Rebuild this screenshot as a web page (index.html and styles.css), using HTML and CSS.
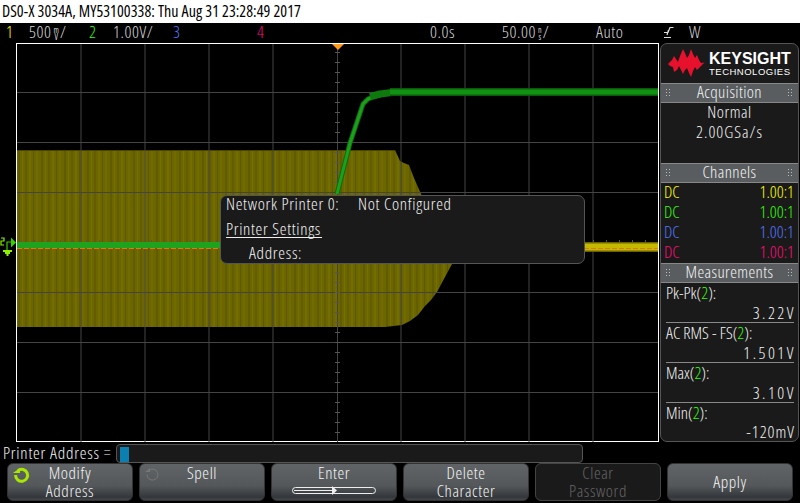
FILE: index.html
```html
<!DOCTYPE html>
<html lang="en">
<head>
<meta charset="utf-8">
<title>DSO-X 3034A</title>
<link rel="stylesheet" href="styles.css">
</head>
<body>
<div class="screen">
  <header class="title">DS0-X 3034A, MY53100338: Thu Aug 31 23:28:49 2017</header>
  <div class="status">
    <span class="ch1">1</span>
    <span>500<span class="stack"><i>m</i><i>V</i></span>/</span>
    <span class="ch2">2</span>
    <span>1.00V/</span>
    <span class="ch3">3</span>
    <span class="ch4">4</span>
    <span>0.0s</span>
    <span>50.00<span class="stack"><i>n</i><i>s</i></span>/</span>
    <span>Auto</span>
    <svg class="trig" width="10" height="12" viewBox="0 0 10 12"><path d="M0 11.500H7M0 6.500H4L6 1.500H9.500M4.500 4L3 9" fill="none" stroke="#ddd" stroke-width="1.200"/></svg>
    <span>W</span>
  </div>
  <main class="main">
    <div class="rail">
      <svg class="rail-marker" width="16" height="20" viewBox="0 0 16 20">
        <path d="M1 1H4V4H1V8H4" fill="none" stroke="#8cf000" stroke-width="1.200"/>
        <path d="M7 13V5H11" fill="none" stroke="#39d000" stroke-width="1.200"/>
        <path d="M11 0.500L16 5.500L11 10.500Z" fill="#39d000"/>
        <path d="M3 13H12V15H3ZM5 15H10V17H5ZM6.500 17H8.500V19H6.500Z" fill="#8cf000"/>
      </svg>
    </div>
    <section class="graticule">
      <svg class="scope" viewBox="17 44 641 398" width="641" height="398" xmlns="http://www.w3.org/2000/svg">
        <defs>
          <pattern id="stripes" x="17" y="0" width="23" height="400" patternUnits="userSpaceOnUse">
            <rect width="23" height="400" fill="#6c6600"/>
            <rect x="1" width="2" height="400" fill="#625c00"/>
            <rect x="5" width="1" height="400" fill="#767000"/>
            <rect x="8" width="2" height="400" fill="#645e00"/>
            <rect x="12" width="2" height="400" fill="#746e00"/>
            <rect x="16" width="1" height="400" fill="#5e5900"/>
            <rect x="19" width="2" height="400" fill="#726c00"/>
          </pattern>
        </defs>
        <path class="yellow-body" d="M17 150H395L400 161L404 163L409 165L414 178L421 194L452 264L445 277L437 292L431 300L425 306L418 315L410 321L402 325L385 327H17Z"/>
        <path class="yellow-edge" d="M17 150.500H395"/>
        <g class="gridlines">
          <path d="M81 44V442M145 44V442M209 44V442M273 44V442M337.500 44V442M401 44V442M465 44V442M529 44V442M593 44V442"/>
          <path d="M17 92.500H658M17 142.500H658M17 192.500H658M17 242.500H658M17 292.500H658M17 342.500H658M17 392.500H658"/>
        </g>
        <path class="ticks" d="M337.500 44V442" stroke-dasharray="1 9" stroke-dashoffset="-8"/>
        <path class="ticks" d="M17 242.500H658" stroke-dasharray="1 12" stroke-dashoffset="-4"/>
        <path class="yellow-trace-dim" d="M560 247H658"/>
        <path class="yellow-trace" d="M560 247H658"/>
        <path class="green-flat" d="M17 245H345"/>
        <path class="orange" d="M17 248.500H658"/>
        <path class="green-rise-dim" d="M337 194L350 143L363 104L368 99L373 97L388 92.500"/>
        <path class="green-rise" d="M337 194L350 143L363 104L368 99L373 97L388 92.500"/>
        <path class="green-shoulder" d="M370 96.500L380 94L392 92.500"/>
        <path class="green-top-dim" d="M390 92H658"/>
        <path class="green-top" d="M390 92H658"/>
        <path class="trigger-mark" d="M332 44H344L338 50Z"/>
      </svg>
      <div class="dialog">
        <div class="dialog-row"><span class="dialog-label">Network Printer 0:</span><span>Not Configured</span></div>
        <div class="dialog-row"><span class="dialog-heading">Printer Settings</span></div>
        <div class="dialog-row dialog-indent">Address:</div>
      </div>
    </section>
    <aside class="panel">
      <div class="logo">
        <svg class="logo-wave" width="37" height="29" viewBox="0 0 37 29"><path d="M0 15L4 11L6 7L8 10L10 13L12 7L15 0L17 4L19 9L21 6L23 0L25 5L27 9L29 6L31 11L33 14L36.500 13.500L33 17L31 19L29 21L27 18L25 22L23 28L21 24L19 19L17 21L15 25L13 21L11 17L9 21L6 23L5 18L2 17Z" fill="#e8112d"/></svg>
        <div class="logo-text"><b>KEYSIGHT</b><span>TECHNOLOGIES</span></div>
      </div>
      <h2 class="panel-head">Acquisition</h2>
      <div class="acq"><div>Normal</div><div class="rate">2.00GSa/s</div></div>
      <h2 class="panel-head">Channels</h2>
      <div class="channels">
        <div class="row ch1"><span>DC</span><span>1.00:1</span></div>
        <div class="row ch2"><span>DC</span><span>1.00:1</span></div>
        <div class="row ch3"><span>DC</span><span>1.00:1</span></div>
        <div class="row ch4"><span>DC</span><span>1.00:1</span></div>
      </div>
      <h2 class="panel-head">Measurements</h2>
      <div class="measure">
        <div class="m"><div>Pk-Pk(<span class="ch2">2</span>):</div><div class="val">3.22V</div></div>
        <div class="m"><div>AC RMS - FS(<span class="ch2">2</span>):</div><div class="val">1.501V</div></div>
        <div class="m"><div>Max(<span class="ch2">2</span>):</div><div class="val">3.10V</div></div>
        <div class="m"><div>Min(<span class="ch2">2</span>):</div><div class="val val-tight">-120mV</div></div>
      </div>
    </aside>
  </main>
  <div class="entry">
    <label class="entry-label">Printer Address =</label>
    <div class="entry-box"><span class="cursor"></span></div>
  </div>
  <nav class="keys">
    <button class="key">
      <svg class="key-icon" width="17" height="17" viewBox="0 0 17 17"><path d="M5 3.500A6 6 0 1 1 2.600 8" fill="none" stroke="#a8e800" stroke-width="3"/><path d="M0 6H7V1Z" fill="#a8e800"/></svg>
      <span>Modify</span><span>Address</span>
    </button>
    <button class="key">
      <svg class="key-icon" width="15" height="15" viewBox="0 0 15 15"><path d="M4.500 3A5.500 5.500 0 1 1 2 7.500" fill="none" stroke="#777" stroke-width="1"/><path d="M0 5H5V1Z" fill="#777"/></svg>
      <span>Spell</span><span>&nbsp;</span>
    </button>
    <button class="key">
      <span>Enter</span>
      <svg class="enter-bar" width="84" height="9" viewBox="0 0 84 9"><rect x="0.500" y="1.500" width="83" height="6" rx="3" fill="none" stroke="#eee"/><path d="M2 4.500H40" stroke="#eee"/><path d="M40 0L45 4.500L40 9Z" fill="#eee"/></svg>
    </button>
    <button class="key"><span>Delete</span><span>Character</span></button>
    <button class="key off"><span>Clear</span><span>Password</span></button>
    <button class="key"><span>Apply</span></button>
  </nav>
</div>
</body>
</html>
```
FILE: styles.css
```css
* { box-sizing: border-box; }
html, body { margin: 0; padding: 0; background: #000; }
body { width: 800px; height: 503px; overflow: hidden; font-family: "Open Sans", "Liberation Sans", sans-serif; font-stretch: 75%; font-weight: 350; font-size: 17px; color: #f4f4f4; }
.screen { display: flex; flex-direction: column; width: 800px; height: 503px; }
.title { height: 23px; background: #fff; color: #000; padding-left: 2px; line-height: 23px; font-size: 16px; font-weight: 400; letter-spacing: 0.060px; white-space: nowrap; }
.status { height: 20px; display: grid; grid-template-columns: 23px 60px 24px 60px 84px 173px 72px 94px 68px 25px 30px; padding-left: 6px; line-height: 18px; align-items: start; color: #d8d8d8; white-space: nowrap; letter-spacing: 0.600px; }
.ch1 { color: #ffff00; }
.ch2 { color: #33ff00; }
.ch3 { color: #5577ff; }
.ch4 { color: #ff0a78; }
.stack { display: inline-flex; flex-direction: column; vertical-align: middle; line-height: 7px; font-size: 8px; font-weight: 400; margin: 0 1px 0 2px; letter-spacing: 0; align-items: center; }
.stack i { font-style: normal; }
.trig { align-self: center; margin-top: -2px; }
.main { display: flex; height: 399px; }
.rail { width: 16px; position: relative; }
.rail-marker { position: absolute; left: 0; top: 194px; }
.graticule { position: relative; width: 643px; height: 399px; border: 1px solid #fff; background: #000; }
.scope { display: block; }
.yellow-body { fill: url(#stripes); }
.yellow-edge { stroke: #4a4500; stroke-width: 1; fill: none; }
.gridlines path { stroke: #444; stroke-width: 1; fill: none; }
.ticks { stroke: #555; stroke-width: 5; fill: none; }
.yellow-trace-dim { stroke: #6a6400; stroke-width: 10; fill: none; }
.yellow-trace { stroke: #c4b800; stroke-width: 7; fill: none; }
.green-flat { stroke: #1fa31f; stroke-width: 6; fill: none; }
.orange { stroke: #e07a10; stroke-width: 1; stroke-dasharray: 5 2; fill: none; }
.green-rise-dim { stroke: #0f6a0f; stroke-width: 5; fill: none; stroke-linejoin: round; }
.green-rise { stroke: #1aa01a; stroke-width: 3; fill: none; stroke-linejoin: round; }
.green-shoulder { stroke: #0e7a0e; stroke-width: 7; fill: none; }
.green-top-dim { stroke: #0a5a0a; stroke-width: 8; fill: none; }
.green-top { stroke: #129212; stroke-width: 5; fill: none; }
.trigger-mark { fill: #ff9a1a; }
.dialog { position: absolute; left: 203px; top: 151px; width: 365px; height: 69px; background: #1a1a1a; border: 1px solid #555; border-radius: 7px; padding: 0 5px; display: flex; flex-direction: column; gap: 8.500px; letter-spacing: 0.700px; }
.dialog-row { height: 16px; line-height: 16px; display: flex; white-space: nowrap; }
.dialog-label { width: 132px; }
.dialog-heading { border-bottom: 1px solid #eee; height: 17px; width: 96px; }
.dialog-indent { padding-left: 23px; }
.panel { margin-left: 1px; width: 139px; height: 399px; background: #1a1a1a; border: 1px solid #555; border-radius: 7px; overflow: hidden; display: flex; flex-direction: column; }
.logo { height: 39px; display: flex; align-items: center; padding-left: 7px; gap: 4px; flex: none; }
.logo-wave { flex: none; }
.logo-text { display: flex; flex-direction: column; color: #fff; font-family: "Liberation Sans", sans-serif; font-stretch: normal; }
.logo-text b { font-size: 16px; line-height: 16px; }
.logo-text span { font-size: 9.500px; line-height: 10px; letter-spacing: 0.500px; font-weight: 400; }
.panel-head { margin: 0; height: 20px; flex: none; background: #595d5f; border-top: 1px solid #888; border-bottom: 1px solid #888; font-weight: 350; font-size: 17px; line-height: 16px; text-align: center; letter-spacing: 0.400px; position: relative; }
.panel-head::before, .panel-head::after { content: ""; position: absolute; top: 5px; width: 5px; height: 8px; background-image: radial-gradient(circle at 0.500px 0.500px, #bbb 0.700px, transparent 0.800px); background-size: 3px 3px; }
.panel-head::before { left: 5px; }
.panel-head::after { right: 5px; }
.acq { height: 60px; flex: none; text-align: center; line-height: 18px; letter-spacing: 0.500px; display: flex; flex-direction: column; gap: 2px; }
.rate { letter-spacing: 1px; }
.channels { height: 80px; flex: none; padding: 0 4px 0 3px; }
.row { height: 20px; line-height: 18px; display: flex; justify-content: space-between; }
.measure { flex: 1; padding: 0 4px 0 5px; min-height: 0; }
.m { height: 40px; line-height: 19px; border-bottom: 1px solid #888; white-space: nowrap; }
.m > div { height: 20px; }
.m:last-child { border-bottom: 0; height: 38px; }
.m:last-child .val { line-height: 18px; height: 18px; }
.val { text-align: right; letter-spacing: 2.500px; margin-right: -2px; }
.val.val-tight { letter-spacing: 1px; margin-right: -1px; }
.entry { height: 21px; display: flex; align-items: flex-start; padding-top: 2px; }
.entry-label { width: 116px; padding-left: 3px; line-height: 18px; white-space: nowrap; letter-spacing: 0.800px; }
.entry-box { width: 467px; height: 19px; background: #1a1a1a; border: 1px solid #555; border-radius: 4px; padding: 2px 3px; }
.cursor { display: block; width: 9px; height: 15px; background: #0a7fb0; }
.keys { height: 39px; display: flex; gap: 6px; padding-left: 7px; }
.key { position: relative; width: 126px; height: 38px; border: 1px solid #333; border-radius: 6px; background: linear-gradient(#606466 0%, #54585a 60%, #33363a 92%, #44474a 100%); color: #f4f4f4; font: inherit; letter-spacing: 0.600px; padding: 0; display: flex; flex-direction: column; align-items: center; justify-content: space-between; line-height: 18px; }
.key-icon { position: absolute; left: 5px; top: 3px; }
.enter-bar { margin-bottom: 5px; }
.key.off { background: #1a1a1a; color: #666; border-color: #444; }
.key:last-child { justify-content: center; }
```
